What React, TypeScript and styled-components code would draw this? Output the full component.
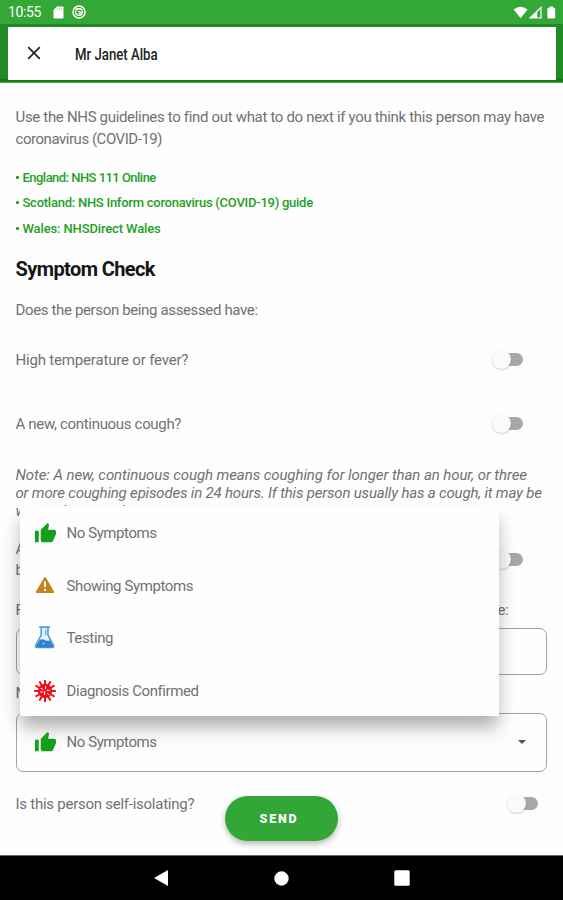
import React from 'react';
import styled, { createGlobalStyle } from 'styled-components';

const GlobalStyle = createGlobalStyle`
  *, *::before, *::after { box-sizing: border-box; }
  body { margin: 0; background: #fefefe; font-family: Roboto, "Liberation Sans", sans-serif; }
`;

const Screen = styled.div`
  position: relative;
  display: flex;
  flex-direction: column;
  width: 563px;
  height: 900px;
  overflow: hidden;
  background: #fefefe;
`;

const StatusBar = styled.header`
  display: flex;
  align-items: center;
  flex: none;
  height: 24px;
  padding: 0 7px 0 8px;
  background: #34a836;
  color: #fff;
  svg { display: block; }
`;

const Clock = styled.span`
  width: 45px;
  font-size: 14px;
  letter-spacing: -0.4px;
  line-height: 24px;
`;

const StatusIcons = styled.div<{ $gap: number; $end?: boolean }>`
  display: flex;
  align-items: center;
  gap: ${(p) => p.$gap}px;
  margin-left: ${(p) => (p.$end ? 'auto' : '0')};
`;

const AppBar = styled.div`
  flex: none;
  height: 59px;
  padding: 2.5px 7px 0 7.5px;
  background: linear-gradient(#228a24 0 55px, #0d7a15 55px 58px, #4faa50 58px);
`;

const TitleCard = styled.div`
  display: flex;
  align-items: center;
  height: 53px;
  padding-left: 19.5px;
  background: #fff;
  svg { display: block; margin-right: 33.5px; }
`;

const Title = styled.h1`
  margin: 2px 0 0;
  font-size: 17px;
  font-weight: 500;
  color: #222;
  white-space: nowrap;
  transform: scaleX(0.776);
  transform-origin: left center;
`;

const Form = styled.main`
  display: flex;
  flex-direction: column;
  flex: 1;
  min-height: 0;
  padding: 24px 16px 0 15.5px;
`;

const Line = styled.div<{ $h?: number; $ls?: number }>`
  flex: none;
  height: ${(p) => p.$h ?? 21}px;
  line-height: ${(p) => p.$h ?? 21}px;
  font-size: 15px;
  letter-spacing: ${(p) => p.$ls ?? -0.33}px;
  color: #717171;
  white-space: nowrap;
`;

const Note = styled.div`
  flex: none;
  height: 54px;
  margin-top: 17px;
  font-style: italic;
`;

const Links = styled.ul`
  flex: none;
  margin: 14px 0 0;
  padding: 0;
  list-style: none;
`;

const LinkItem = styled.li<{ $ls: number }>`
  display: flex;
  align-items: center;
  gap: 4px;
  height: 25.5px;
  padding-top: 1px;
  font-size: 13px;
  font-weight: 500;
  letter-spacing: ${(p) => p.$ls}px;
  color: #1fa024;
  white-space: nowrap;
  &::before {
    content: '';
    width: 3px;
    height: 3px;
    border-radius: 1px;
    background: #1fa024;
  }
`;

const Heading = styled.h2`
  flex: none;
  height: 30px;
  margin: 13px 0 16px;
  font-size: 20px;
  line-height: 30px;
  letter-spacing: -0.6px;
  color: #161616;
`;

const Question = styled.div<{ $h: number; $inset: number; $drop?: number }>`
  display: flex;
  align-items: center;
  justify-content: space-between;
  flex: none;
  height: ${(p) => p.$h}px;
  padding: ${(p) => p.$drop ?? 0}px ${(p) => p.$inset}px 0 0;
`;

const Track = styled.span`
  position: relative;
  width: 29px;
  height: 13px;
  margin-bottom: 2px;
  border-radius: 7px;
  background: #a8a8a8;
  &::after {
    content: '';
    position: absolute;
    left: -2px;
    top: -3px;
    width: 19px;
    height: 19px;
    border-radius: 50%;
    background: #fafafa;
    box-shadow: 0 1px 2px rgba(0, 0, 0, 0.2);
  }
`;

const Spread = styled(Line)`
  width: 493px;
  margin-top: 1.5px;
  text-align: justify;
  text-align-last: justify;
`;

const FieldLabel = styled(Line)`
  margin-top: 8px;
`;

const Field = styled.div<{ $h: number; $top: number }>`
  position: relative;
  display: flex;
  align-items: center;
  flex: none;
  height: ${(p) => p.$h}px;
  margin-top: ${(p) => p.$top}px;
  border: 1.5px solid #a2a2a2;
  border-radius: 7px;
`;

const Option = styled.div<{ $ls: number; $pad: number }>`
  display: flex;
  align-items: center;
  flex: 1;
  padding-left: ${(p) => p.$pad}px;
  font-size: 15px;
  letter-spacing: ${(p) => p.$ls}px;
  color: #717171;
  white-space: nowrap;
  svg { display: block; }
`;

const OptionText = styled.span`
  position: relative;
  z-index: 1;
`;

const IconSlot = styled.span`
  position: relative;
  z-index: 1;
  display: flex;
  align-items: center;
  justify-content: center;
  width: 24px;
  height: 24px;
  margin-right: 9.5px;
`;

const Menu = styled.div`
  position: absolute;
  left: 3px;
  bottom: 55px;
  display: flex;
  flex-direction: column;
  width: 479.5px;
  height: 210px;
  padding-top: 1px;
  background: #fefefe;
  box-shadow: 0 12px 14px -2px rgba(0, 0, 0, 0.23), 0 14px 24px rgba(0, 0, 0, 0.11);
`;

const MenuOption = styled(Option)`
  flex: none;
  height: 52.6px;
`;

const Caret = styled.span`
  margin-right: 20px;
  border: 4.5px solid transparent;
  border-top-color: #505050;
  border-bottom-width: 0;
`;

const SendButton = styled.button`
  position: absolute;
  left: 225px;
  top: 795.5px;
  width: 113px;
  height: 45px;
  padding: 0;
  border: 0;
  border-radius: 23px;
  background: #32a737;
  color: #fff;
  font: 900 12.5px Roboto, "Liberation Sans", sans-serif;
  letter-spacing: 1.8px;
  text-indent: -5px;
  box-shadow: 0 3px 6px rgba(0, 0, 0, 0.28);
`;

const NavBar = styled.nav`
  display: grid;
  grid-template-columns: repeat(3, 120.5px);
  place-items: center;
  place-content: center;
  flex: none;
  height: 45px;
  border-top: 1px solid #666;
  background: #000;
  svg { display: block; }
`;

const ThumbUp = () => (
  <svg width="23" height="23" viewBox="0 0 24 24" fill="#15a01b">
    <path d="M1 21h4V9H1v12zm22-11c0-1.1-.9-2-2-2h-6.31l.95-4.57.03-.32c0-.41-.17-.79-.44-1.06L14.17 1 7.59 7.59C7.22 7.95 7 8.45 7 9v10c0 1.1.9 2 2 2h9c.83 0 1.54-.5 1.84-1.22l3.02-7.05c.09-.23.14-.47.14-.73v-2z" />
  </svg>
);

const Warning = () => (
  <svg width="24" height="24" viewBox="0 0 24 24">
    <path d="M12 4.200 20 18H4z" fill="#c8821a" stroke="#c8821a" strokeWidth="2.2" strokeLinejoin="round" />
    <path d="M12 7.500v5.500" stroke="#fff" strokeWidth="2" />
    <circle cx="12" cy="16" r="1.15" fill="#fff" />
  </svg>
);

const Flask = () => (
  <svg width="24" height="24" viewBox="0 0 24 24">
    <path d="M8.200 1.500v7.500L3 18.500Q1.600 21.600 4.600 21.600h14q3 0 1.600-3.100L15 9V1.500" fill="#e4f0fb" stroke="#4d97dc" strokeWidth="1.5" />
    <path d="M6.600 14q2.600-1.600 5.200 0t5 .2l3.100 5q.9 2-1.200 2H5q-2.400 0-1.200-2.200z" fill="#2f82d0" />
    <path d="M7 1.200h9.300" stroke="#4d97dc" strokeWidth="1.8" strokeLinecap="round" />
    <path d="M12.800 3.500v6" stroke="#8cbfee" strokeWidth="2" />
    <circle cx="10.500" cy="17.500" r="1" fill="#a9d2f5" />
  </svg>
);

const spikes = Array.from({ length: 12 }, (_, i) => i * 30);

const Virus = () => (
  <svg width="24" height="24" viewBox="0 0 24 24">
    <circle cx="12" cy="12" r="7.200" fill="#ee1118" />
    {spikes.map((a) => (
      <path
        key={a}
        transform={`rotate(${a} 12 12)`}
        d="M12 6V1.800"
        stroke="#ee1118"
        strokeWidth="2"
        strokeLinecap="round"
      />
    ))}
    <path d="M8 9.400l1.800.9M12.600 7.400v2.200M7.500 13h2.400M11.600 12.600v3M14 11.400h2.400M14.600 14.600l1.300 1" stroke="#fff" strokeWidth="1" strokeLinecap="round" />
  </svg>
);

const options = [
  { label: 'No Symptoms', ls: -0.43, icon: <ThumbUp /> },
  { label: 'Showing Symptoms', ls: -0.39, icon: <Warning /> },
  { label: 'Testing', ls: -0.36, icon: <Flask /> },
  { label: 'Diagnosis Confirmed', ls: -0.41, icon: <Virus /> },
];

export default function App() {
  return (
    <Screen>
      <GlobalStyle />
      <StatusBar>
        <Clock>10:55</Clock>
        <StatusIcons $gap={8}>
          <svg width="11" height="13" viewBox="0 0 11 13">
            <path d="M4 .5h5.500q1 0 1 1v10q0 1-1 1h-8q-1 0-1-1V4z" fill="#fff" />
            <path d="M4.300 2v2M6.300 2v2M8.300 2v2" stroke="#9bd39c" strokeWidth=".8" />
          </svg>
          <svg width="14" height="14" viewBox="0 0 14 14" fill="none" stroke="#fff">
            <circle cx="7" cy="7" r="6" strokeWidth="1.5" />
            <circle cx="7" cy="7" r="3.300" strokeWidth="1.3" />
            <path d="M3.500 3.800h5.800M6 6.200l3 1.200-2.400 2" strokeWidth="1.2" />
          </svg>
        </StatusIcons>
        <StatusIcons $gap={0} $end>
          <svg width="43" height="13" viewBox="0 0 43 13">
            <path d="M.6 3.600Q7.500-2 14.600 3.600L7.600 12.200z" fill="#fff" />
            <path d="M28 1.500V12H17.200z" fill="none" stroke="#fff" strokeWidth="1.2" />
            <path d="M24.200 5.400V12h-7z" fill="#fff" />
            <path d="M36.600.500h3.400v1.200h1.200q1 0 1 1v8.800q0 1-1 1h-5.800q-1 0-1-1V2.700q0-1 1-1h1.200z" fill="#fff" />
          </svg>
        </StatusIcons>
      </StatusBar>
      <AppBar>
        <TitleCard>
          <svg width="14" height="14" viewBox="0 0 14 14">
            <path d="M1.200 1.200l11.600 11.600M12.800 1.200L1.200 12.800" stroke="#222" strokeWidth="1.700" />
          </svg>
          <Title>Mr Janet Alba</Title>
        </TitleCard>
      </AppBar>
      <Form>
        <Line $ls={-0.325}>Use the NHS guidelines to find out what to do next if you think this person may have</Line>
        <Line $h={22} $ls={-0.46}>coronavirus (COVID-19)</Line>
        <Links>
          <LinkItem $ls={-0.53}>England: NHS 111 Online</LinkItem>
          <LinkItem $ls={-0.25}>Scotland: NHS Inform coronavirus (COVID-19) guide</LinkItem>
          <LinkItem $ls={-0.13}>Wales: NHSDirect Wales</LinkItem>
        </Links>
        <Heading>Symptom Check</Heading>
        <Line $ls={-0.36}>Does the person being assessed have:</Line>
        <Question $h={79} $inset={24}>
          <Line $ls={-0.18}>High temperature or fever?</Line>
          <Track />
        </Question>
        <Question $h={49} $inset={24}>
          <Line $ls={-0.32}>A new, continuous cough?</Line>
          <Track />
        </Question>
        <Note>
          <Line $h={18} $ls={-0.083}>Note: A new, continuous cough means coughing for longer than an hour, or three</Line>
          <Line $h={18} $ls={-0.183}>or more coughing episodes in 24 hours. If this person usually has a cough, it may be</Line>
          <Line $h={18} $ls={-0.1}>worse than usual.</Line>
        </Note>
        <Question $h={79} $inset={24} $drop={2}>
          <div>
            <Line>A loss of, or change in, their normal sense of taste or smell,</Line>
            <Line>but without a blocked nose?</Line>
          </div>
          <Track />
        </Question>
        <Spread>For how many days in total has this person been having symptoms like these:</Spread>
        <Field $h={47} $top={6.5} />
        <FieldLabel>New status:</FieldLabel>
        <Field $h={59.5} $top={9}>
          <Menu>
            {options.map((o) => (
              <MenuOption key={o.label} $ls={o.ls} $pad={13.5}>
                <IconSlot>{o.icon}</IconSlot>
                <OptionText>{o.label}</OptionText>
              </MenuOption>
            ))}
          </Menu>
          <Option $ls={options[0].ls} $pad={16.5}>
            <IconSlot>{options[0].icon}</IconSlot>
            <OptionText>{options[0].label}</OptionText>
          </Option>
          <Caret />
        </Field>
        <Question $h={65} $inset={9}>
          <Line $ls={-0.255}>Is this person self-isolating?</Line>
          <Track />
        </Question>
      </Form>
      <SendButton>SEND</SendButton>
      <NavBar>
        <svg width="14" height="16" viewBox="0 0 14 16"><path d="M0 8 14 0v16z" fill="#fff" /></svg>
        <svg width="15" height="15" viewBox="0 0 15 15"><circle cx="7.500" cy="7.500" r="7.200" fill="#fff" /></svg>
        <svg width="16" height="16" viewBox="0 0 16 16"><rect x=".3" y=".3" width="15.400" height="15.400" rx="1.500" fill="#fff" /></svg>
      </NavBar>
    </Screen>
  );
}
